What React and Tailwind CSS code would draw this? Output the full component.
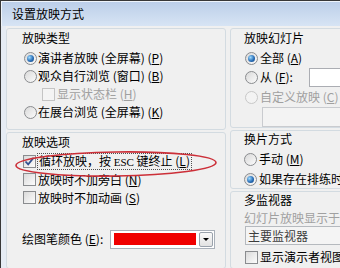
import React from "react";

const font = "font-['Noto_Sans_CJK_SC','Noto_Sans',sans-serif]";

function Radio({ checked, disabled }) {
  return (
    <span
      className={
        "relative flex h-[13px] w-[13px] shrink-0 items-center justify-center rounded-full border " +
        (disabled
          ? "border-[#c8c8c8] bg-[#f3f3f3]"
          : "border-[#8a8c8f] bg-[linear-gradient(135deg,#d9d9d9,#fbfbfb)]")
      }
    >
      {checked && (
        <span className="h-[7px] w-[7px] rounded-full bg-[radial-gradient(circle_at_35%_35%,#9fdcff,#2a6fb8_55%,#0f3f7a)]" />
      )}
    </span>
  );
}

function Check({ checked, disabled }) {
  return (
    <span
      className={
        "relative flex h-[13px] w-[13px] shrink-0 items-center justify-center border " +
        (disabled
          ? "border-[#c4c4c4] bg-[#f4f4f4]"
          : "border-[#8a8c8f] bg-[linear-gradient(135deg,#dadada,#fcfcfc)]")
      }
    >
      {checked && (
        <svg width="11" height="11" viewBox="0 0 11 11">
          <path d="M1.5 5.5 L4.2 8.4 L9.6 1.8" fill="none" stroke="#31508f" strokeWidth="1.8" />
        </svg>
      )}
    </span>
  );
}

function Key({ k }) {
  return (
    <span>
      (<span className="underline underline-offset-[1px]">{k}</span>)
    </span>
  );
}

export default function App() {
  return (
    <div className={"relative h-[268px] w-[340px] overflow-hidden border-l border-t border-[#383838] bg-[#f0f0f0] text-[12px] leading-[16px] text-black " + font}>
      {/* title bar */}
      <div className="flex h-[25px] items-center border-l border-t border-[#eef4fb] bg-[linear-gradient(#bccfe9,#d7e4f4)] pl-[10px] text-[12px]">
        设置放映方式
      </div>

      <div className="flex h-[243px]">
        <div className="w-[5px] shrink-0 bg-[#e6ecf4]" />
        <div className="flex gap-[4px] pt-[2px]">
          {/* left column */}
          <div className="flex w-[220px] shrink-0 flex-col gap-[2px]">
            <div className="h-[104px] rounded-[3px] border border-[#d3dbe1] pl-[15px] pt-[1px]">
              <div className="h-[16px]">放映类型</div>
              <div className="ml-[2px] mt-[3px] flex h-[18px] items-center gap-[1px]">
                <Radio checked />
                <span>演讲者放映 (全屏幕) <Key k="P" /></span>
              </div>
              <div className="ml-[2px] flex h-[18px] items-center gap-[1px]">
                <Radio />
                <span>观众自行浏览 (窗口) <Key k="B" /></span>
              </div>
              <div className="ml-[20px] flex h-[18px] items-center gap-[2px] text-[#a0a0a0]">
                <Check disabled />
                <span>显示状态栏 <Key k="H" /></span>
              </div>
              <div className="ml-[2px] flex h-[18px] items-center gap-[1px]">
                <Radio />
                <span>在展台浏览 (全屏幕) <Key k="K" /></span>
              </div>
            </div>

            <div className="h-[140px] rounded-[3px] border border-[#d3dbe1] pl-[15px] pt-[1px]">
              <div className="h-[16px]">放映选项</div>
              <div className="ml-[1px] mt-[3px] flex h-[18px] items-center gap-[1px]">
                <Check checked />
                <span className="border border-dotted border-[#505050] px-[1px] leading-[14px]">
                  循环放映，按 <span className="font-['Liberation_Serif',serif] text-[11px]">ESC</span> 键终止 <Key k="L" />
                </span>
              </div>
              <div className="ml-[1px] flex h-[18px] items-center gap-[2px]">
                <Check />
                <span>放映时不加旁白 <Key k="N" /></span>
              </div>
              <div className="ml-[1px] flex h-[18px] items-center gap-[2px]">
                <Check />
                <span>放映时不加动画 <Key k="S" /></span>
              </div>
              <div className="mt-[23px] flex h-[19px] items-center">
                <span className="w-[88px] shrink-0">绘图笔颜色 <Key k="E" />:</span>
                <div className="flex h-[19px] w-[105px] items-center border border-[#a9b0b9] bg-white">
                  <div className="ml-[3px] h-[12px] w-[82px] bg-[#f00000]" />
                  <div className="ml-[3px] flex h-[15px] w-[14px] items-center justify-center rounded-[2px] border border-[#9aa2ac] bg-[linear-gradient(#fafafa,#e2e2e2)]">
                    <span className="h-0 w-0 border-x-[3px] border-t-[3px] border-x-transparent border-t-black" />
                  </div>
                </div>
              </div>
            </div>
          </div>

          {/* right column */}
          <div className="flex w-[120px] shrink-0 flex-col gap-[2px]">
            <div className="h-[102px] rounded-[3px] border border-[#d3dbe1] pl-[13px] pt-[1px]">
              <div className="h-[16px]">放映幻灯片</div>
              <div className="ml-[1px] mt-[3px] flex h-[18px] items-center gap-[2px]">
                <Radio checked />
                <span>全部 <Key k="A" /></span>
              </div>
              <div className="ml-[1px] flex h-[20px] items-center gap-[2px]">
                <Radio />
                <span className="w-[49px]">从 <Key k="F" />:</span>
                <div className="h-[19px] w-[40px] shrink-0 border border-[#abadb3] bg-white" />
              </div>
              <div className="ml-[1px] mt-[1px] flex h-[18px] items-center gap-[2px] text-[#a0a0a0]">
                <Radio disabled />
                <span className="whitespace-nowrap">自定义放映 <Key k="C" /></span>
              </div>
              <div className="ml-[18px] mt-[1px] h-[20px] w-[90px] border border-[#c9cbcf] bg-[#f3f3f3]" />
            </div>

            <div className="h-[61px] rounded-[3px] border border-[#d3dbe1] pl-[13px]">
              <div className="h-[16px]">换片方式</div>
              <div className="mt-[3px] flex h-[18px] items-center gap-[2px]">
                <Radio />
                <span>手动 <Key k="M" /></span>
              </div>
              <div className="mt-[2px] flex h-[18px] items-center gap-[2px]">
                <Radio checked />
                <span className="whitespace-nowrap">如果存在排练时间，则使用它 <Key k="U" /></span>
              </div>
            </div>

            <div className="h-[80px] rounded-[3px] border border-[#d3dbe1] pl-[13px]">
              <div className="h-[16px]">多监视器</div>
              <div className="mt-[2px] h-[16px] whitespace-nowrap text-[#a0a0a0]">幻灯片放映显示于 <Key k="O" />:</div>
              <div className="ml-[1px] flex h-[19px] w-[110px] items-center border border-[#b5b9be] bg-[#f4f4f4] pl-[2px] text-[#3c3c3c]">
                主要监视器
              </div>
              <div className="ml-[1px] mt-[4px] flex h-[16px] items-center gap-[2px]">
                <Check />
                <span className="whitespace-nowrap">显示演示者视图 <Key k="W" /></span>
              </div>
            </div>
          </div>
        </div>
      </div>

      {/* red annotation ellipse */}
      <svg className="absolute left-[12px] top-[149px]" width="206" height="30" viewBox="0 0 206 30">
        <ellipse cx="103" cy="14" rx="100" ry="12" fill="none" stroke="#cc2f38" strokeWidth="1.6" transform="rotate(-0.8 103 14)" />
      </svg>
    </div>
  );
}
